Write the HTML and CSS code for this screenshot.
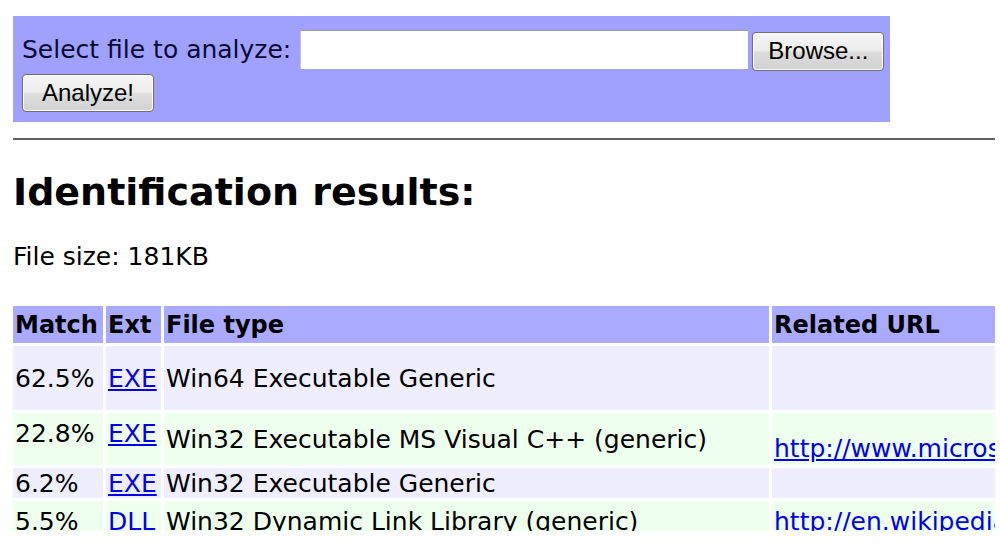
FILE: index.html
```html
<!DOCTYPE html>
<html>
<head>
<meta charset="utf-8">
<link rel="stylesheet" href="styles.css">
</head>
<body>
<div class="page">
  <form class="upload">
    <div class="row">
      <span class="label">Select file to analyze:</span>
      <span class="input"></span>
      <span class="btn browse">Browse...</span>
    </div>
    <div class="row">
      <span class="btn analyze">Analyze!</span>
    </div>
  </form>
  <div class="rule"></div>
  <h1>Identification results:</h1>
  <p class="size">File size: 181KB</p>
  <table class="results">
    <colgroup>
      <col class="c-match">
      <col class="c-ext">
      <col class="c-type">
      <col class="c-url">
    </colgroup>
    <tr class="head">
      <th>Match</th>
      <th>Ext</th>
      <th>File type</th>
      <th>Related URL</th>
    </tr>
    <tr class="odd r1">
      <td>62.5%</td>
      <td><a href="#">EXE</a></td>
      <td>Win64 Executable Generic</td>
      <td></td>
    </tr>
    <tr class="even r2">
      <td class="top">22.8%</td>
      <td class="top"><a href="#">EXE</a></td>
      <td>Win32 Executable MS Visual C++ (generic)</td>
      <td class="low"><a href="#">http://www.microsoft.com/</a></td>
    </tr>
    <tr class="odd r3">
      <td>6.2%</td>
      <td><a href="#">EXE</a></td>
      <td>Win32 Executable Generic</td>
      <td></td>
    </tr>
    <tr class="even r4">
      <td>5.5%</td>
      <td><a href="#">DLL</a></td>
      <td>Win32 Dynamic Link Library (generic)</td>
      <td><a href="#">http://en.wikipedia.org/</a></td>
    </tr>
  </table>
</div>
</body>
</html>
```

FILE: styles.css
```css
html, body {
  margin: 0;
  padding: 0;
  background: #fff;
}
body {
  font-family: "DejaVu Sans", Verdana, sans-serif;
  color: #000;
  overflow: hidden;
}
.page {
  width: 995px;
  height: 531px;
  overflow: hidden;
  padding-left: 13px;
  box-sizing: border-box;
}
.upload {
  margin: 16px 0 0 0;
  width: 877px;
  height: 106px;
  background: #a0a0ff;
  padding: 12px 0 0 9px;
  box-sizing: border-box;
}
.row {
  display: flex;
  align-items: center;
  height: 42px;
}
.label {
  font-size: 25px;
  margin-right: 9px;
  color: #0a0a30;
}
.input {
  display: block;
  width: 448px;
  height: 39px;
  background: #fff;
  border-top: 1px solid #9a9a9a;
  border-left: 1px solid #c8c8c8;
  box-sizing: border-box;
}
.btn {
  display: flex;
  align-items: center;
  justify-content: center;
  font-family: "Liberation Sans", Arial, sans-serif;
  font-size: 24px;
  color: #000;
  border: 1px solid #707070;
  border-radius: 4px;
  background: linear-gradient(#f6f6f6 0%, #ececec 48%, #dcdcdc 52%, #d2d2d2 100%);
  box-shadow: inset 0 0 0 1px #fcfcfc;
  box-sizing: border-box;
}
.browse {
  width: 132px;
  height: 39px;
  margin-left: 4px;
  margin-top: 4px;
}
.analyze {
  width: 132px;
  height: 38px;
  margin-top: 4px;
}
.rule {
  margin-top: 16px;
  height: 2px;
  background: #606060;
  width: 982px;
}
h1 {
  margin: 30px 0 0 0;
  font-size: 38px;
  font-weight: bold;
  line-height: 44px;
}
.size {
  margin: 28px 0 0 0;
  font-size: 25px;
  line-height: 30px;
}
.results {
  margin-top: 31px;
  border-collapse: separate;
  border-spacing: 3px;
  margin-left: -3px;
  font-size: 25px;
  table-layout: fixed;
  width: 1065px;
}
.c-match { width: 90px; }
.c-ext { width: 55px; }
.c-type { width: 605px; }
.c-url { width: 300px; }
.results th {
  background: #aaaaff;
  text-align: left;
  font-size: 24px;
  font-weight: bold;
  padding: 0 2px;
  height: 37px;
  white-space: nowrap;
  overflow: hidden;
}
.results td {
  padding: 0 2px;
  white-space: nowrap;
  overflow: hidden;
  vertical-align: middle;
}
.results td.top { vertical-align: top; padding-top: 6px; }
.results td.low { vertical-align: bottom; padding-bottom: 2px; }
.odd td { background: #eeeeff; }
.even td { background: #eeffee; }
.r1 td { height: 64px; }
.r2 td { height: 46px; }
.r3 td { height: 30px; }
.r4 td { height: 40px; padding-top: 6px; vertical-align: top; }
a { color: #0000ee; text-decoration: underline; }
```
